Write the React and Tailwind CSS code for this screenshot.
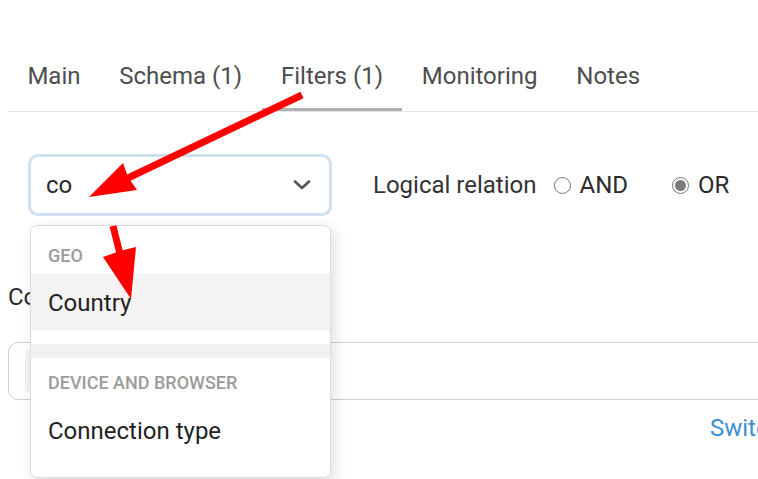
const tabs = [
  { label: "Main" },
  { label: "Schema (1)" },
  { label: "Filters (1)", active: true },
  { label: "Monitoring" },
  { label: "Notes" },
];

export default function App() {
  return (
    <div className="relative h-[479px] w-[758px] overflow-hidden bg-white font-[Roboto,sans-serif] text-[24px] text-[#2b2b2b]">
      <div className="w-[1000px] pl-2 pt-[50px]">
        {/* tabs */}
        <div className="flex border-b border-[#e4e4e4]">
          {tabs.map((t) => (
            <div
              key={t.label}
              className={`border-b-[3px] px-[19.4px] pt-[12px] pb-[18px] leading-[28px] text-[#4d4d4d] ${
                t.active ? "border-[#b0b0b3]" : "border-transparent"
              }`}
            >
              {t.label}
            </div>
          ))}
        </div>

        {/* controls */}
        <div className="mt-[42px] ml-5 flex items-center">
          <div className="flex h-[62px] w-[304px] items-center justify-between rounded-[10px] border-[3px] border-[#cfe1f0] bg-white pr-4 pl-[15px]">
            <span className="leading-[28px] text-[#2b2b2b]">co</span>
            <svg width="20" height="12" viewBox="0 0 20 12" className="mr-[1px]">
              <path d="M3 2.5 L10 9 L17 2.5" fill="none" stroke="#555" strokeWidth="2.6" strokeLinecap="round" strokeLinejoin="round" />
            </svg>
          </div>
          <span className="ml-[41px] leading-[28px] text-[#333]">Logical relation</span>
          <label className="ml-[17px] flex items-center">
            <span className="h-[17px] w-[17px] rounded-full border border-[#777]" />
            <span className="ml-[9px] leading-[28px] text-[#2b2b2b]">AND</span>
          </label>
          <label className="ml-[44px] flex items-center">
            <span className="flex h-[17px] w-[17px] items-center justify-center rounded-full border border-[#777]">
              <span className="h-[11px] w-[11px] rounded-full bg-[#7b7b7b]" />
            </span>
            <span className="ml-[9px] leading-[28px] text-[#2b2b2b]">OR</span>
          </label>
        </div>

        {/* content under the dropdown */}
        <div className="mt-[67px] leading-[28px] text-[#2b2b2b]">Country</div>
        <div className="mt-[31px] flex h-[58px] items-center rounded-[10px] border border-[#cfcfd2] px-4">
          <div className="h-[42px] w-[120px] rounded-[4px] bg-[#f2f2f2]" />
        </div>
        <div className="mt-[14px] pl-[702px] leading-[28px] whitespace-nowrap text-[#3a8fd6]">
          Switch to advanced mode
        </div>
      </div>

      {/* dropdown menu */}
      <div className="absolute top-[225px] left-[30px] h-[253px] w-[301px] overflow-hidden rounded-[7px] border border-[#dcdcdc] bg-white shadow-[4px_4px_14px_rgba(0,0,0,0.12)]">
        <div className="px-[17px] pt-[20px] pb-[8px] text-[18px] leading-[20px] font-medium text-[#9b9b9b]">GEO</div>
        <div className="flex h-[57px] items-center bg-[#f5f3f4] px-[17px] text-[#222]">Country</div>
        <div className="mt-[13px] h-[14px] bg-[#f1f1f1]" />
        <div className="px-[17px] pt-[15px] pb-[10px] text-[18px] leading-[20px] font-medium text-[#9b9b9b]">
          DEVICE AND BROWSER
        </div>
        <div className="flex h-[55px] items-center px-[17px] text-[#222]">Connection type</div>
      </div>

      {/* annotation arrows */}
      <svg className="pointer-events-none absolute inset-0" width="758" height="479" viewBox="0 0 758 479">
        <line x1="302" y1="95" x2="128" y2="178" stroke="#ff0000" strokeWidth="7" />
        <polygon points="89,197 123,163 128,177 137,190" fill="#ff0000" />
        <line x1="113" y1="226" x2="120" y2="254" stroke="#ff0000" strokeWidth="7" />
        <polygon points="131,299 103,257 120,251 136,247" fill="#ff0000" />
      </svg>
    </div>
  );
}
